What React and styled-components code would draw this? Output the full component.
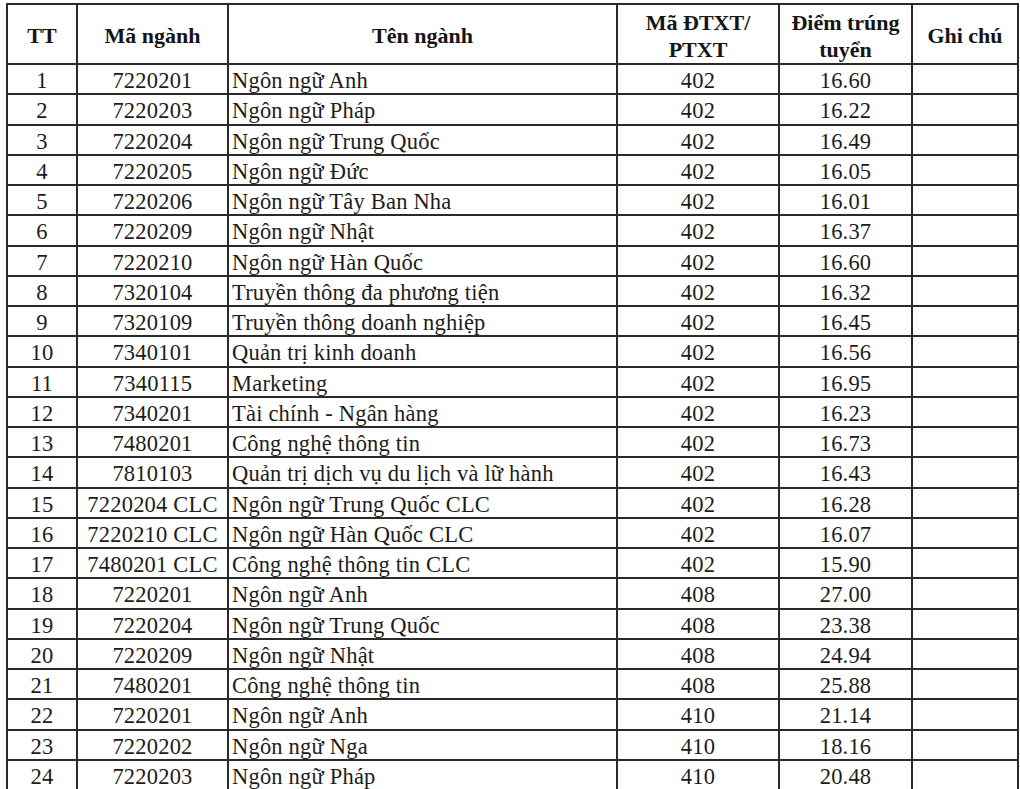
import React from "react";
import styled, { createGlobalStyle } from "styled-components";

const GlobalStyle = createGlobalStyle`
  html, body {
    margin: 0;
    padding: 0;
    background: #ffffff;
  }
  body {
    font-family: "Liberation Serif", "Times New Roman", serif;
    color: #1c1c1c;
    overflow: hidden;
  }
`;

const rows = [
  ["1", "7220201", "Ngôn ngữ Anh", "402", "16.60"],
  ["2", "7220203", "Ngôn ngữ Pháp", "402", "16.22"],
  ["3", "7220204", "Ngôn ngữ Trung Quốc", "402", "16.49"],
  ["4", "7220205", "Ngôn ngữ Đức", "402", "16.05"],
  ["5", "7220206", "Ngôn ngữ Tây Ban Nha", "402", "16.01"],
  ["6", "7220209", "Ngôn ngữ Nhật", "402", "16.37"],
  ["7", "7220210", "Ngôn ngữ Hàn Quốc", "402", "16.60"],
  ["8", "7320104", "Truyền thông đa phương tiện", "402", "16.32"],
  ["9", "7320109", "Truyền thông doanh nghiệp", "402", "16.45"],
  ["10", "7340101", "Quản trị kinh doanh", "402", "16.56"],
  ["11", "7340115", "Marketing", "402", "16.95"],
  ["12", "7340201", "Tài chính - Ngân hàng", "402", "16.23"],
  ["13", "7480201", "Công nghệ thông tin", "402", "16.73"],
  ["14", "7810103", "Quản trị dịch vụ du lịch và lữ hành", "402", "16.43"],
  ["15", "7220204 CLC", "Ngôn ngữ Trung Quốc CLC", "402", "16.28"],
  ["16", "7220210 CLC", "Ngôn ngữ Hàn Quốc CLC", "402", "16.07"],
  ["17", "7480201 CLC", "Công nghệ thông tin CLC", "402", "15.90"],
  ["18", "7220201", "Ngôn ngữ Anh", "408", "27.00"],
  ["19", "7220204", "Ngôn ngữ Trung Quốc", "408", "23.38"],
  ["20", "7220209", "Ngôn ngữ Nhật", "408", "24.94"],
  ["21", "7480201", "Công nghệ thông tin", "408", "25.88"],
  ["22", "7220201", "Ngôn ngữ Anh", "410", "21.14"],
  ["23", "7220202", "Ngôn ngữ Nga", "410", "18.16"],
  ["24", "7220203", "Ngôn ngữ Pháp", "410", "20.48"],
];

const Page = styled.div`
  padding: 3px 0 0 6px;
`;

const Table = styled.table`
  border-collapse: collapse;
  table-layout: fixed;
  width: 1011px;
  font-size: 22.5px;
  letter-spacing: 0.2px;
`;

const HeadCell = styled.th`
  height: 55px;
  padding: 3px 2px 0;
  border: 2px solid #2a2a2a;
  font-weight: bold;
  font-size: 22px;
  line-height: 27px;
  letter-spacing: 0;
  text-align: center;
  vertical-align: middle;
  color: #151515;
`;

const Cell = styled.td`
  padding: 4px ${(p) => (p.$left ? "3px" : "2px")} 0;
  border: 2px solid #2a2a2a;
  height: 24.25px;
  line-height: 24px;
  text-align: ${(p) => (p.$left ? "left" : "center")};
  vertical-align: middle;
  white-space: nowrap;
  overflow: hidden;
`;

export default function App() {
  return (
    <Page>
      <GlobalStyle />
      <Table>
        <colgroup>
          <col style={{ width: 70 }} />
          <col style={{ width: 151 }} />
          <col style={{ width: 389 }} />
          <col style={{ width: 162 }} />
          <col style={{ width: 133 }} />
          <col style={{ width: 106 }} />
        </colgroup>
        <thead>
          <tr>
            <HeadCell>TT</HeadCell>
            <HeadCell>Mã ngành</HeadCell>
            <HeadCell>Tên ngành</HeadCell>
            <HeadCell>
              Mã ĐTXT/
              <br />
              PTXT
            </HeadCell>
            <HeadCell>
              Điểm trúng
              <br />
              tuyển
            </HeadCell>
            <HeadCell>Ghi chú</HeadCell>
          </tr>
        </thead>
        <tbody>
          {rows.map((r) => (
            <tr key={r[0]}>
              <Cell>{r[0]}</Cell>
              <Cell>{r[1]}</Cell>
              <Cell $left>{r[2]}</Cell>
              <Cell>{r[3]}</Cell>
              <Cell>{r[4]}</Cell>
              <Cell />
            </tr>
          ))}
        </tbody>
      </Table>
    </Page>
  );
}
